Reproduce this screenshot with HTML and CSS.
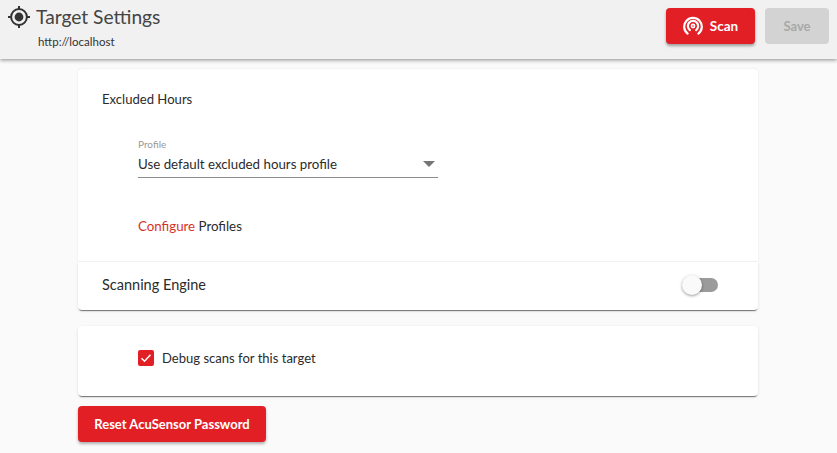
FILE: index.html
```html
<!DOCTYPE html>
<html lang="en">
<head>
<meta charset="utf-8">
<title>Target Settings</title>
<link rel="stylesheet" href="styles.css">
</head>
<body>
<header class="topbar">
  <div class="heading">
    <div class="title-row">
      <svg class="target-icon" width="22" height="22" viewBox="0 0 22 22" fill="none" stroke="#333"><circle cx="11" cy="11" r="7.9" stroke-width="2"/><circle cx="11" cy="11" r="4.4" fill="#333" stroke="none"/><path d="M11 0v3.5M11 18.5V22M0 11h3.5M18.5 11H22" stroke-width="2"/></svg>
      <h1 class="title">Target Settings</h1>
    </div>
    <div class="subtitle">http://localhost</div>
  </div>
  <div class="actions">
    <button class="btn btn-scan" type="button">
      <svg width="20" height="20" viewBox="0 0 20 20" fill="none" stroke="#fff" stroke-width="2.2" stroke-linecap="round"><path d="M4.6 17.6a8.8 8.8 0 1 1 10.8 0"/><path d="M6.9 14.1a5.1 5.1 0 1 1 6.2 0"/><circle cx="10" cy="10" r="1.6" stroke-width="1.6"/></svg>
      <span>Scan</span>
    </button>
    <button class="btn btn-save" type="button">Save</button>
  </div>
</header>
<main class="content">
  <section class="card card-hours">
    <h2 class="card-title">Excluded Hours</h2>
    <div class="field">
      <div class="field-label">Profile</div>
      <div class="select">
        <span>Use default excluded hours profile</span>
        <span class="caret"></span>
      </div>
    </div>
    <p class="configure"><a class="link" href="#">Configure</a> Profiles</p>
  </section>
  <section class="card card-engine">
    <h2 class="engine-title">Scanning Engine</h2>
    <div class="toggle"><span class="toggle-thumb"></span></div>
  </section>
  <section class="card card-debug">
    <label class="check-row">
      <span class="checkbox"><svg width="16" height="16" viewBox="0 0 16 16" fill="none" stroke="#fff" stroke-width="1.5"><path d="M3.5 8.2l3 3 6-6.4"/></svg></span>
      <span class="check-label">Debug scans for this target</span>
    </label>
  </section>
  <button class="btn btn-reset" type="button">Reset AcuSensor Password</button>
</main>
</body>
</html>
```
FILE: styles.css
```css
* { box-sizing: border-box; }
html, body { margin: 0; padding: 0; }
body {
  width: 837px;
  height: 453px;
  overflow: hidden;
  background: #fafafa;
  color: #2b2b2b;
  font-family: "Lato", "Noto Sans", sans-serif;
  font-size: 13.3px;
}
.topbar {
  height: 59px;
  background: #f1f1f1;
  box-shadow: 0 1px 4px rgba(0, 0, 0, 0.45);
  display: flex;
  justify-content: space-between;
  padding: 6px 8px 0 8px;
  position: relative;
}
.title-row { display: flex; align-items: center; gap: 6px; height: 22px; }
.title { margin: 0; font-size: 19.2px; font-weight: 400; color: #444; line-height: 24px; }
.subtitle { font-size: 11.5px; line-height: 14px; margin: 7px 0 0 30px; color: #333; }
.actions { display: flex; gap: 10px; padding-top: 2px; }
.btn {
  border: 0;
  border-radius: 4px;
  font-family: inherit;
  font-size: 13px;
  font-weight: 700;
  height: 36px;
  padding: 0;
  display: flex;
  align-items: center;
  justify-content: center;
}
.btn-scan {
  width: 89px;
  gap: 7px;
  font-size: 13.5px;
  background: #e31f26;
  color: #fff;
  box-shadow: 0 2px 3px rgba(0, 0, 0, 0.35);
}
.btn-save { width: 64px; background: #d3d3d3; color: #a8a8a8; }
.content { width: 680px; margin-left: 78px; padding-top: 10px; }
.card { background: #fff; }
.card-hours {
  height: 192px;
  padding: 22px 24px 0;
  border-radius: 4px 4px 0 0;
  box-shadow: 0 0 2px rgba(0, 0, 0, 0.1);
}
.card-title { margin: 0; font-size: 13.1px; font-weight: 400; line-height: 16px; }
.field { width: 300px; margin: 31px 0 0 36px; }
.field-label { font-size: 10px; line-height: 12px; color: #9a9a9a; }
.select {
  height: 28px;
  border-bottom: 1px solid #8c8c8c;
  display: flex;
  align-items: center;
  justify-content: space-between;
  padding: 2px 3px 2px 0;
}
.caret {
  width: 0;
  height: 0;
  border-left: 6px solid transparent;
  border-right: 6px solid transparent;
  border-top: 6px solid #757575;
}
.configure { margin: 39px 0 0 36px; line-height: 18px; }
.link { color: #d8321e; text-decoration: none; }
.card-engine {
  height: 48px;
  margin-top: 1px;
  display: flex;
  align-items: center;
  justify-content: space-between;
  padding: 0 40px 3px 24px;
  border-radius: 0 0 4px 4px;
  box-shadow: 0 2px 1px -1px rgba(0, 0, 0, 0.5), 0 1px 3px rgba(0, 0, 0, 0.12);
}
.engine-title { margin: 0; font-size: 14.5px; font-weight: 400; }
.toggle { width: 36px; height: 14px; display: flex; align-items: center; justify-content: flex-end; position: relative; }
.toggle::before { content: ""; width: 30px; height: 14px; border-radius: 7px; background: #9b9b9b; }
.toggle-thumb {
  position: absolute;
  left: 0;
  top: -3px;
  width: 20px;
  height: 20px;
  border-radius: 50%;
  background: #fafafa;
  box-shadow: 0 1px 3px rgba(0, 0, 0, 0.4);
}
.card-debug {
  height: 70px;
  margin-top: 16px;
  padding: 24px 0 0 60px;
  border-radius: 4px;
  box-shadow: 0 2px 1px -1px rgba(0, 0, 0, 0.5), 0 1px 3px rgba(0, 0, 0, 0.12);
}
.check-row { display: flex; align-items: center; gap: 8px; }
.check-label { font-size: 13.05px; }
.checkbox { width: 16px; height: 16px; border-radius: 2px; background: #e31f26; display: flex; }
.btn-reset {
  width: 188px;
  margin-top: 10px;
  background: #e31f26;
  color: #fff;
  box-shadow: 0 2px 3px rgba(0, 0, 0, 0.3);
}
```
